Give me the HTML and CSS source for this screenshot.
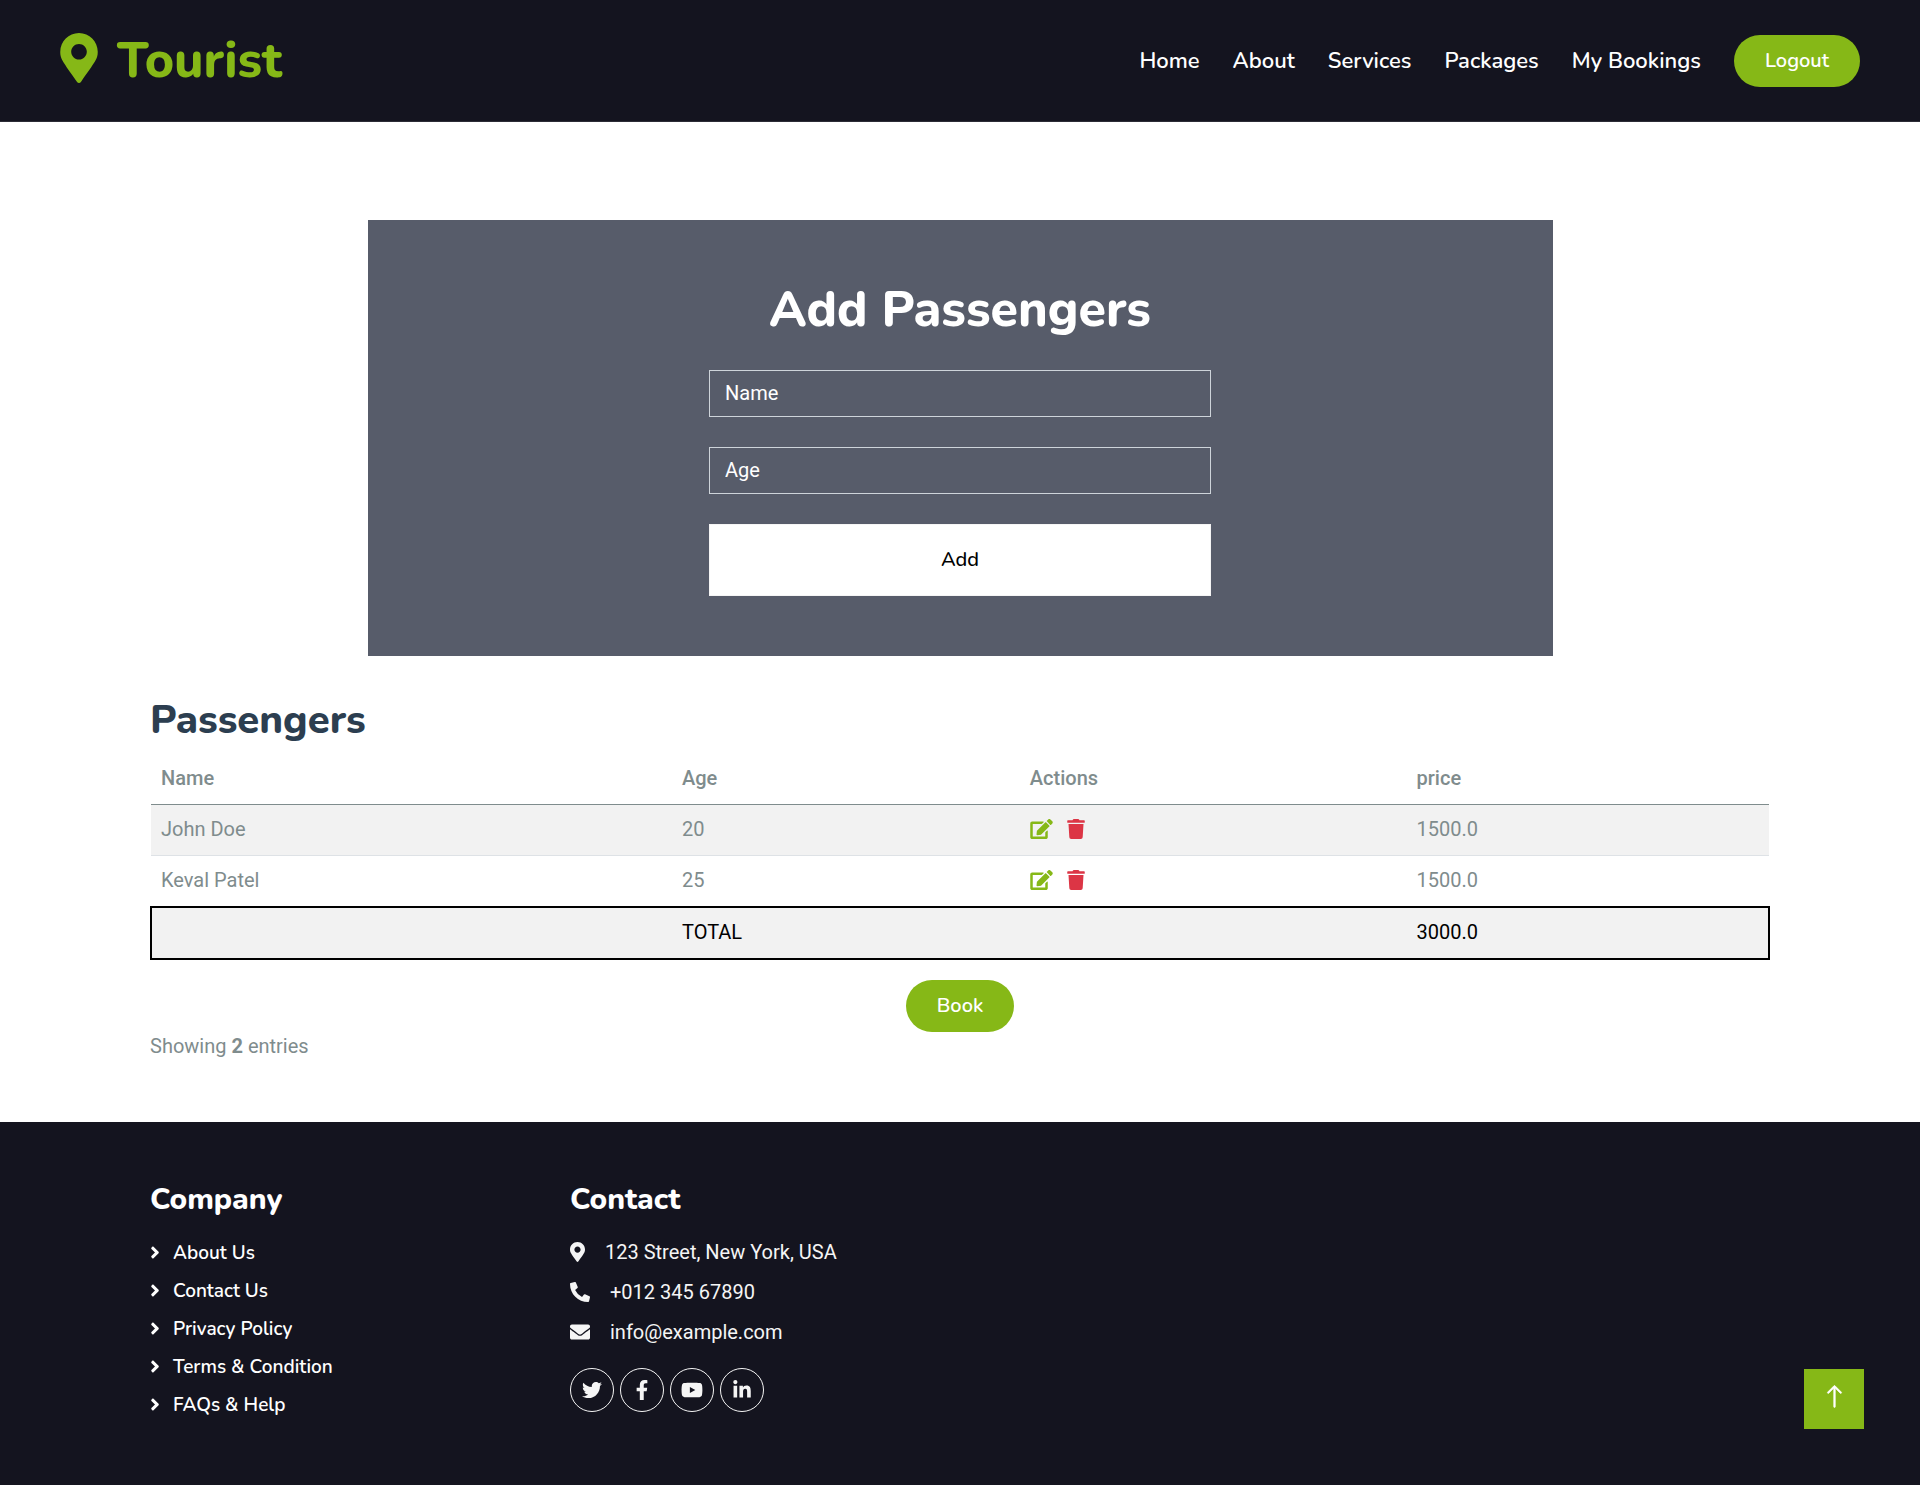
FILE: index.html
```html
<!DOCTYPE html>
<html lang="en">
<head>
<meta charset="utf-8">
<meta name="viewport" content="width=device-width, initial-scale=1">
<title>Tourist</title>
<link rel="stylesheet" href="styles.css">
</head>
<body>
<svg class="sprite" aria-hidden="true">
  <symbol id="pin" viewBox="0 0 384 512"><path d="M172.268 501.67C26.97 291.031 0 269.413 0 192 0 85.961 85.961 0 192 0s192 85.961 192 192c0 77.413-26.97 99.031-172.268 309.67-9.535 13.774-29.93 13.773-39.464 0zM192 272c44.183 0 80-35.817 80-80s-35.817-80-80-80-80 35.817-80 80 35.817 80 80 80z"/></symbol>
  <symbol id="phone" viewBox="0 0 512 512"><path d="M497.39 361.8l-112-48a24 24 0 0 0-28 6.9l-49.6 60.6A370.66 370.66 0 0 1 130.6 204.11l60.6-49.6a23.94 23.94 0 0 0 6.9-28l-48-112A24.16 24.16 0 0 0 122.6.61l-104 24A24 24 0 0 0 0 48c0 256.5 207.9 464 464 464a24 24 0 0 0 23.4-18.6l24-104a24.29 24.29 0 0 0-14.01-27.6z"/></symbol>
  <symbol id="envelope" viewBox="0 0 512 512"><path d="M502.3 190.8c3.9-3.1 9.7-.2 9.7 4.7V400c0 26.5-21.5 48-48 48H48c-26.5 0-48-21.5-48-48V195.6c0-5 5.7-7.8 9.7-4.7 22.4 17.4 52.1 39.5 154.1 113.6 21.1 15.4 56.7 47.8 92.2 47.6 35.7.3 72-32.8 92.3-47.6 102-74.1 131.6-96.3 154-113.7zM256 320c23.2.4 56.6-29.2 73.4-41.4 132.7-96.3 142.8-104.7 173.4-128.7 5.8-4.5 9.2-11.5 9.2-18.9v-19c0-26.5-21.5-48-48-48H48c-26.5 0-48 21.5-48 48v19c0 7.4 3.4 14.3 9.2 18.9 30.6 23.9 40.7 32.4 173.4 128.7 16.8 12.2 50.2 41.8 73.4 41.4z"/></symbol>
  <symbol id="chevron" viewBox="0 0 256 512"><path d="M224.3 273l-136 136c-9.400 9.400-24.600 9.400-33.900 0l-22.600-22.600c-9.400-9.400-9.400-24.600 0-33.900l96.400-96.400-96.400-96.400c-9.400-9.400-9.400-24.600 0-33.900L54.300 103c9.400-9.400 24.600-9.400 33.900 0l136 136c9.500 9.400 9.500 24.600.1 34z"/></symbol>
  <symbol id="edit" viewBox="0 0 576 512"><path d="M402.6 83.2l90.2 90.2c3.8 3.8 3.8 10 0 13.8L274.4 405.6l-92.8 10.3c-12.4 1.4-22.9-9.1-21.5-21.5l10.3-92.8L388.8 83.2c3.8-3.8 10-3.8 13.8 0zm162-22.9l-48.8-48.8c-15.2-15.2-39.9-15.2-55.2 0l-35.4 35.4c-3.8 3.8-3.8 10 0 13.8l90.2 90.2c3.8 3.8 10 3.8 13.8 0l35.4-35.4c15.2-15.3 15.2-40 0-55.2zM384 346.2V448H64V128h229.8c3.2 0 6.2-1.3 8.5-3.5l40-40c7.6-7.6 2.2-20.5-8.5-20.5H48C21.500 64 0 85.5 0 112v352c0 26.500 21.500 48 48 48h352c26.500 0 48-21.500 48-48V306.200c0-10.700-12.900-16-20.500-8.500l-40 40c-2.200 2.300-3.500 5.300-3.500 8.500z"/></symbol>
  <symbol id="trash" viewBox="0 0 448 512"><path d="M432 32H312l-9.400-18.700A24 24 0 0 0 281.100 0H166.800a23.720 23.720 0 0 0-21.400 13.300L136 32H16A16 16 0 0 0 0 48v32a16 16 0 0 0 16 16h416a16 16 0 0 0 16-16V48a16 16 0 0 0-16-16zM53.200 467a48 48 0 0 0 47.900 45h245.800a48 48 0 0 0 47.900-45L416 128H32z"/></symbol>
  <symbol id="twitter" viewBox="0 0 512 512"><path d="M459.370 151.716c.325 4.548.325 9.097.325 13.645 0 138.720-105.583 298.558-298.558 298.558-59.452 0-114.680-17.219-161.137-47.106 8.447.974 16.568 1.299 25.340 1.299 49.055 0 94.213-16.568 130.274-44.832-46.132-.975-84.792-31.188-98.112-72.772 6.498.974 12.995 1.624 19.818 1.624 9.421 0 18.843-1.300 27.614-3.573-48.081-9.747-84.143-51.980-84.143-102.985v-1.299c13.969 7.797 30.214 12.670 47.431 13.319-28.264-18.843-46.781-51.005-46.781-87.391 0-19.492 5.197-37.360 14.294-52.954 51.655 63.675 129.300 105.258 216.365 109.807-1.624-7.797-2.599-15.918-2.599-24.040 0-57.828 46.782-104.934 104.934-104.934 30.213 0 57.502 12.670 76.670 33.137 23.715-4.548 46.456-13.320 66.599-25.340-7.798 24.366-24.366 44.833-46.132 57.827 21.117-2.273 41.584-8.122 60.426-16.243-14.292 20.791-32.161 39.308-52.628 54.253z"/></symbol>
  <symbol id="facebook" viewBox="0 0 320 512"><path d="M279.140 288l14.220-92.660h-88.910v-60.130c0-25.350 12.420-50.060 52.240-50.060h40.420V6.260S260.430 0 225.360 0c-73.220 0-121.080 44.380-121.080 124.720v70.620H22.890V288h81.390v224h100.170V288z"/></symbol>
  <symbol id="youtube" viewBox="0 0 576 512"><path d="M549.655 124.083c-6.281-23.650-24.787-42.276-48.284-48.597C458.781 64 288 64 288 64S117.220 64 74.629 75.486c-23.497 6.322-42.003 24.947-48.284 48.597-11.412 42.867-11.412 132.305-11.412 132.305s0 89.438 11.412 132.305c6.281 23.650 24.787 41.500 48.284 47.821C117.220 448 288 448 288 448s170.780 0 213.371-11.486c23.497-6.321 42.003-24.171 48.284-47.821 11.412-42.867 11.412-132.305 11.412-132.305s0-89.438-11.412-132.305zm-317.510 213.508V175.185l142.739 81.205-142.739 81.201z"/></symbol>
  <symbol id="linkedin" viewBox="0 0 448 512"><path d="M100.280 448H7.400V148.900h92.880zM53.790 108.100C24.090 108.100 0 83.500 0 53.800a53.790 53.790 0 0 1 107.580 0c0 29.700-24.100 54.300-53.790 54.300zM447.900 448h-92.680V302.400c0-34.700-.7-79.200-48.290-79.200-48.290 0-55.690 37.700-55.690 76.700V448h-92.780V148.900h89.080v40.800h1.300c12.400-23.500 42.690-48.300 87.880-48.300 94 0 111.280 61.900 111.280 142.300V448z"/></symbol>
</svg>

<header class="topbar">
  <a class="brand" href="#"><svg><use href="#pin"/></svg><span>Tourist</span></a>
  <nav class="nav">
    <a href="#">Home</a>
    <a href="#">About</a>
    <a href="#">Services</a>
    <a href="#">Packages</a>
    <a href="#">My Bookings</a>
    <a class="pill" href="#">Logout</a>
  </nav>
</header>

<main class="container">
  <form class="booking">
    <h1>Add Passengers</h1>
    <div class="fields">
      <input type="text" placeholder="Name" aria-label="Name">
      <input type="text" placeholder="Age" aria-label="Age">
      <button class="add" type="button">Add</button>
    </div>
  </form>

  <section class="passengers">
    <h2>Passengers</h2>
    <table>
      <thead>
        <tr><th class="col-name">Name</th><th class="col-age">Age</th><th class="col-actions">Actions</th><th>price</th></tr>
      </thead>
      <tbody>
        <tr>
          <td>John Doe</td><td>20</td>
          <td><div class="actions"><a class="edit" href="#" aria-label="Edit"><svg><use href="#edit"/></svg></a><a class="delete" href="#" aria-label="Delete"><svg><use href="#trash"/></svg></a></div></td>
          <td>1500.0</td>
        </tr>
        <tr>
          <td>Keval Patel</td><td>25</td>
          <td><div class="actions"><a class="edit" href="#" aria-label="Edit"><svg><use href="#edit"/></svg></a><a class="delete" href="#" aria-label="Delete"><svg><use href="#trash"/></svg></a></div></td>
          <td>1500.0</td>
        </tr>
        <tr class="total"><td></td><td>TOTAL</td><td></td><td>3000.0</td></tr>
      </tbody>
    </table>
    <div class="book"><button class="pill" type="button">Book</button></div>
    <p class="count">Showing <b>2</b> entries</p>
  </section>
</main>

<footer class="footer">
  <div class="container footer-grid">
    <section>
      <h3>Company</h3>
      <ul class="links">
        <li><a href="#"><svg><use href="#chevron"/></svg>About Us</a></li>
        <li><a href="#"><svg><use href="#chevron"/></svg>Contact Us</a></li>
        <li><a href="#"><svg><use href="#chevron"/></svg>Privacy Policy</a></li>
        <li><a href="#"><svg><use href="#chevron"/></svg>Terms &amp; Condition</a></li>
        <li><a href="#"><svg><use href="#chevron"/></svg>FAQs &amp; Help</a></li>
      </ul>
    </section>
    <section>
      <h3>Contact</h3>
      <ul class="contact">
        <li><svg class="narrow"><use href="#pin"/></svg>123 Street, New York, USA</li>
        <li><svg><use href="#phone"/></svg>+012 345 67890</li>
        <li><svg><use href="#envelope"/></svg>info@example.com</li>
      </ul>
      <div class="social">
        <a href="#" aria-label="Twitter"><svg><use href="#twitter"/></svg></a>
        <a href="#" aria-label="Facebook"><svg><use href="#facebook"/></svg></a>
        <a href="#" aria-label="YouTube"><svg><use href="#youtube"/></svg></a>
        <a href="#" aria-label="LinkedIn"><svg><use href="#linkedin"/></svg></a>
      </div>
    </section>
  </div>
</footer>

<a class="to-top" href="#" aria-label="Back to top"><svg viewBox="0 0 16 16"><path fill-rule="evenodd" d="M8 15a.5.5 0 0 0 .5-.5V2.707l3.146 3.147a.5.5 0 0 0 .708-.708l-4-4a.5.5 0 0 0-.708 0l-4 4a.5.5 0 1 0 .708.708L7.500 2.707V14.500a.5.5 0 0 0 .5.5z"/></svg></a>
</body>
</html>
```
FILE: styles.css
```css
:root {
  --primary: #86b817;
  --dark: #14141f;
  --light: #f5f5f5;
  --muted: #7f8c8d;
  --heading: Nunito, Lato, sans-serif;
}

* { box-sizing: border-box; }

body {
  margin: 0;
  background: #fff;
  color: var(--muted);
  font: 400 20px/30px Roboto, sans-serif;
}

a { color: inherit; text-decoration: none; }
h1, h2, h3, p, ul { margin: 0; padding: 0; }
ul { list-style: none; }
svg { display: block; fill: currentColor; }
.sprite { display: none; }

h1, h2, h3, .brand, .nav, .pill, .add, .links { font-family: var(--heading); }

.topbar {
  display: flex;
  justify-content: space-between;
  align-items: center;
  min-height: 122px;
  padding: 0 60px;
  background: var(--dark);
  border-bottom: 1px solid #2c2c36;
}

.brand {
  display: flex;
  align-items: center;
  gap: 19px;
  color: var(--primary);
  font-size: 50px;
  font-weight: 800;
  line-height: 60px;
}
.brand svg { width: 38px; height: 50px; margin-bottom: 6px; }

.nav {
  display: flex;
  align-items: center;
  gap: 33px;
  color: #fff;
  font-size: 22px;
  font-weight: 600;
}

.pill {
  padding: 11px 31px;
  border: 0;
  border-radius: 26px;
  background: var(--primary);
  color: #fff;
  font-size: 20px;
  font-weight: 600;
  line-height: 30px;
}

.container { max-width: 1680px; margin: 0 auto; padding: 0 30px; }

.booking {
  max-width: 1185px;
  margin: 98px auto 40px;
  padding: 60px 30px;
  background: #575c6a;
  text-align: center;
}
.booking h1 { color: #fff; font-size: 50px; font-weight: 800; line-height: 60px; }

.fields {
  display: grid;
  gap: 30px;
  max-width: 502px;
  margin: 30px auto 0;
}
.fields input {
  width: 100%;
  height: 47px;
  padding: 0 15px 2px;
  border: 1px solid #ced4da;
  border-radius: 0;
  background: transparent;
  color: #fff;
  font: inherit;
}
.fields input::placeholder { color: #fff; opacity: 1; }
.add {
  height: 72px;
  padding-bottom: 2px;
  border: 1px solid var(--light);
  background: #fff;
  color: #000;
  font-size: 20px;
  font-weight: 500;
}

.passengers { padding-bottom: 61px; }
.passengers h2 { margin-bottom: 9px; color: #2c3e50; font-size: 40px; font-weight: 800; line-height: 48px; }

table { width: 100%; border-collapse: collapse; text-align: left; }
th, td { height: 51px; padding: 10px; border-bottom: 1px solid #dee2e6; }
td { padding: 9px 10px 11px; }
th { border-color: var(--muted); font-weight: 500; }
tbody tr:nth-child(odd) { background: #f2f2f2; }
.total { border: 2px solid #000; color: #000; }
.col-name { width: 32.2%; }
.col-age { width: 21.5%; }
.col-actions { width: 23.9%; }

.actions { display: flex; gap: 14px; }
.actions svg { height: 20px; }
.edit svg { width: 23px; color: var(--primary); }
.delete svg { width: 18px; color: #dc3545; }

.book { display: flex; justify-content: center; padding-top: 20px; }
.count { margin-top: -1px; }

.footer { padding: 60px 0 72px; background: var(--dark); color: var(--light); }
.footer-grid { display: grid; grid-template-columns: repeat(4, 1fr); gap: 60px; }
.footer h3 { margin-bottom: 19px; color: #fff; font-size: 30px; font-weight: 800; line-height: 36px; }

.links { display: grid; gap: 8px; padding-top: 1px; color: #fff; font-size: 19px; font-weight: 600; }
.links a { display: flex; align-items: center; gap: 13px; }
.links svg { width: 10px; height: 19px; }

.contact { display: grid; gap: 10px; }
.contact li { display: flex; align-items: center; gap: 20px; }
.contact svg { width: 20px; height: 20px; }
.contact .narrow { width: 15px; }

.social { display: flex; gap: 6px; padding-top: 21px; }
.social a {
  display: grid;
  place-items: center;
  width: 44px;
  height: 44px;
  border: 1px solid var(--light);
  border-radius: 50%;
}
.social svg { width: 22px; height: 20px; }

.to-top {
  position: fixed;
  right: 56px;
  bottom: 56px;
  display: grid;
  place-items: center;
  width: 60px;
  height: 60px;
  padding-bottom: 6px;
  background: var(--primary);
  color: #fff;
}
.to-top svg { width: 25px; height: 25px; stroke: currentColor; stroke-width: .4; }
```
